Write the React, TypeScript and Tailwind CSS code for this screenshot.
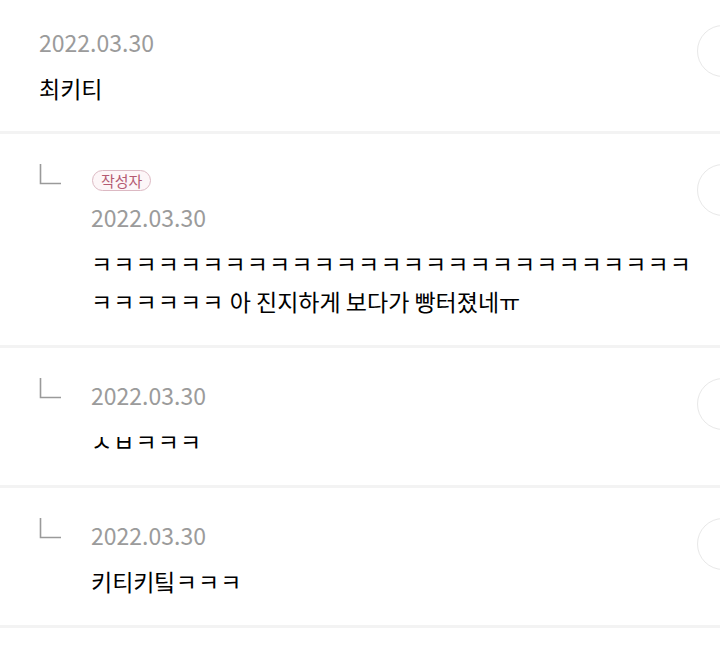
const FONT = "font-['Noto_Sans_CJK_KR','Noto_Sans',sans-serif]";

type Comment = {
  id: number;
  date: string;
  lines: string[];
  reply?: boolean;
  author?: boolean;
};

const comments: Comment[] = [
  { id: 1, date: "2022.03.30", lines: ["최키티"] },
  {
    id: 2,
    date: "2022.03.30",
    lines: [
      "ㅋㅋㅋㅋㅋㅋㅋㅋㅋㅋㅋㅋㅋㅋㅋㅋㅋㅋㅋㅋㅋㅋㅋㅋㅋㅋㅋ",
      "ㅋㅋㅋㅋㅋㅋ 아 진지하게 보다가 빵터졌네ㅠ",
    ],
    reply: true,
    author: true,
  },
  { id: 3, date: "2022.03.30", lines: ["ㅅㅂㅋㅋㅋ"], reply: true },
  { id: 4, date: "2022.03.30", lines: ["키티키팈ㅋㅋㅋ"], reply: true },
];

// jamo runs (ㅋㅋㅋ) are a bit wider in the original font
function Line({ text }: { text: string }) {
  const parts = text.split(/([ㄱ-ㅎ]+)/).filter(Boolean);
  return (
    <p className="whitespace-nowrap">
      {parts.map((part, i) =>
        /^[ㄱ-ㅎ]+$/.test(part) ? (
          <span key={i} className="tracking-[1.1px]">
            {part}
          </span>
        ) : (
          <span key={i}>{part}</span>
        )
      )}
    </p>
  );
}

function ReplyMark() {
  return (
    <svg width="24" height="24" viewBox="0 0 24 24" className="-mt-[3px]">
      <path d="M1.5 1v19.5H22" fill="none" stroke="#9a9a9a" strokeWidth="1.6" />
    </svg>
  );
}

function CommentRow({ c, first }: { c: Comment; first?: boolean }) {
  return (
    <div className={first ? "pt-[27px] pb-[24px]" : "pt-[32px] pb-[25px]"}>
      <div className="flex pl-[39px]">
        {c.reply && (
          <div className="w-[52px] shrink-0">
            <ReplyMark />
          </div>
        )}
        <div className="relative min-w-0 flex-1 pr-[20px]">
          {c.author && (
            <div className="mt-[4px] mb-[11px] ml-px inline-flex h-[21px] items-center rounded-full border border-[#dcb9c3] bg-[#fdf6f8] px-[8px] text-[15px] leading-none text-[#b45a72]">
              작성자
            </div>
          )}
          <p className="text-[23px] leading-[30px] text-[#9b9b9b]">{c.date}</p>
          <div className="mt-[12px] text-[23px] leading-[38px] text-black">
            {c.lines.map((line) => (
              <Line key={line} text={line} />
            ))}
          </div>
          <div className="absolute -top-[2px] -right-[29px] h-[52px] w-[52px] rounded-full border-[1.5px] border-[#e8e8e8] bg-white" />
        </div>
      </div>
    </div>
  );
}

export default function App() {
  return (
    <div className={`${FONT} h-[667px] w-[720px] overflow-hidden bg-white`}>
      {comments.map((c, i) => (
        <div key={c.id}>
          {i > 0 && <div className="h-[3px] bg-[#f3f3f3]" />}
          <CommentRow c={c} first={i === 0} />
        </div>
      ))}
      <div className="h-[3px] bg-[#f3f3f3]" />
    </div>
  );
}
